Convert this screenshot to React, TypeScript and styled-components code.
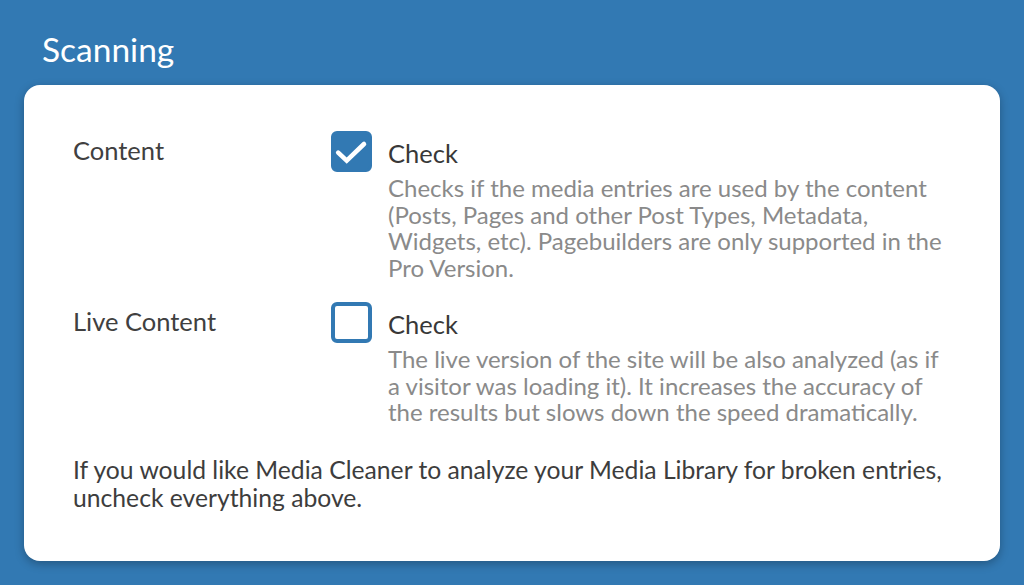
import React, { useState } from 'react';
import styled, { createGlobalStyle } from 'styled-components';

const GlobalStyle = createGlobalStyle`
  html, body {
    margin: 0;
    padding: 0;
    background: #3279b3;
    font-family: Lato, "Open Sans", sans-serif;
  }
`;

const Page = styled.div`
  width: 1024px;
  height: 585px;
  box-sizing: border-box;
  padding: 28px 24px 0 24px;
  background: #3279b3;
`;

const Title = styled.h1`
  margin: 0 0 0 18px;
  height: 57px;
  font-size: 33.5px;
  font-weight: 400;
  line-height: 42px;
  color: #ffffff;
`;

const Card = styled.div`
  box-sizing: border-box;
  height: 476px;
  background: #ffffff;
  border-radius: 16px;
  box-shadow: 0 3px 10px rgba(0, 0, 0, 0.28);
  padding: 46px 40px 0 49px;
`;

const Row = styled.div<{ $gap?: number }>`
  display: grid;
  grid-template-columns: 258px 1fr;
  margin-bottom: ${p => p.$gap ?? 0}px;
`;

const Label = styled.div`
  font-size: 25.5px;
  line-height: 39px;
  color: #404040;
`;

const CheckRow = styled.div`
  display: flex;
  align-items: flex-start;
  gap: 16px;
`;

const Box = styled.button<{ $checked: boolean }>`
  flex: none;
  width: 41px;
  height: 41px;
  box-sizing: border-box;
  padding: 0;
  border-radius: 6px;
  border: ${p => (p.$checked ? 3 : 4)}px solid #3279b3;
  background: ${p => (p.$checked ? '#3279b3' : '#ffffff')};
  display: flex;
  align-items: center;
  justify-content: center;
  cursor: pointer;
`;

const CheckText = styled.div`
  display: flex;
  flex-direction: column;
`;

const CheckTitle = styled.div`
  font-size: 25.5px;
  line-height: 44px;
  color: #383838;
`;

const Description = styled.div`
  max-width: 556px;
  font-size: 24px;
  line-height: 26.5px;
  color: #8a8a8a;
`;

const Footer = styled.p`
  margin: 30px 0 0 0;
  font-size: 24.7px;
  line-height: 28px;
  color: #3d3d3d;
`;

interface IOption {
  label: string;
  description: string;
  gap: number;
}

const options: IOption[] = [
  {
    label: 'Content',
    description:
      'Checks if the media entries are used by the content (Posts, Pages and other Post Types, Metadata, Widgets, etc). Pagebuilders are only supported in the Pro Version.',
    gap: 21,
  },
  {
    label: 'Live Content',
    description:
      'The live version of the site will be also analyzed (as if a visitor was loading it). It increases the accuracy of the results but slows down the speed dramatically.',
    gap: 0,
  },
];

const App = (): React.ReactElement => {
  const [checked, setChecked] = useState<boolean[]>([true, false]);

  const toggle = (idx: number) => {
    setChecked(prev => prev.map((v, i) => (i === idx ? !v : v)));
  };

  return (
    <Page>
      <GlobalStyle />
      <Title>Scanning</Title>
      <Card>
        {options.map((opt, idx) => (
          <Row key={idx} $gap={opt.gap}>
            <Label>{opt.label}</Label>
            <CheckRow>
              <Box $checked={checked[idx]} onClick={() => toggle(idx)} aria-label={opt.label}>
                {checked[idx] && (
                  <svg width="35" height="35" viewBox="0 0 35 35">
                    <path
                      d="M4.2 18.6 L12.7 26.6 L30 10"
                      fill="none"
                      stroke="#ffffff"
                      strokeWidth="4.6"
                      strokeLinecap="round"
                      strokeLinejoin="miter"
                    />
                  </svg>
                )}
              </Box>
              <CheckText>
                <CheckTitle>Check</CheckTitle>
                <Description>{opt.description}</Description>
              </CheckText>
            </CheckRow>
          </Row>
        ))}
        <Footer>
          If you would like Media Cleaner to analyze your Media Library for broken entries,
          <br />
          uncheck everything above.
        </Footer>
      </Card>
    </Page>
  );
};

export default App;
